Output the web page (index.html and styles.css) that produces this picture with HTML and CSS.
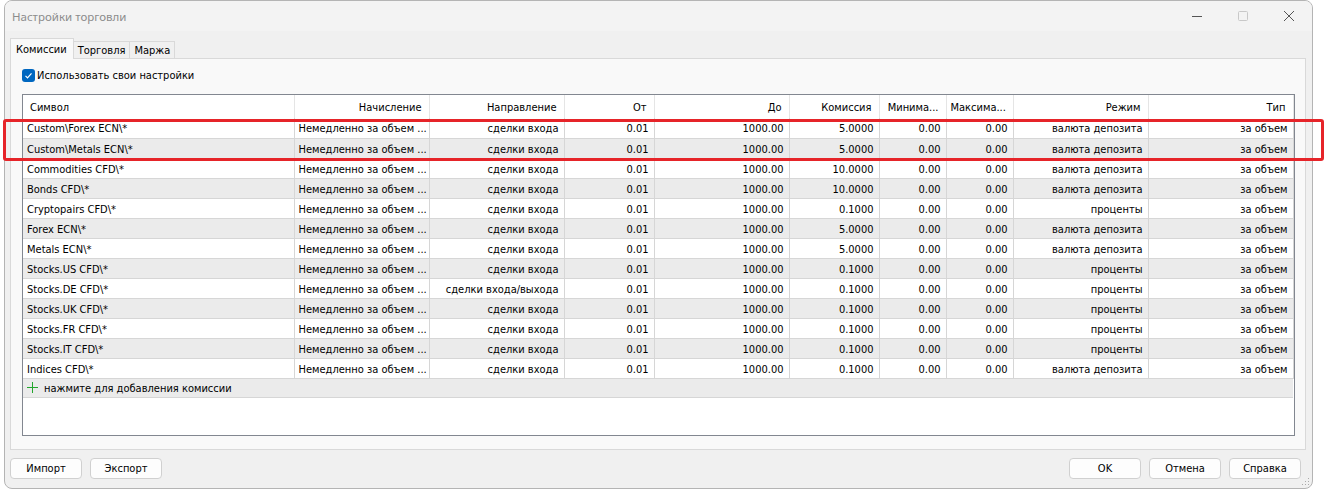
FILE: index.html
```html
<!DOCTYPE html>
<html lang="ru">
<head>
    <title>Настройки торговли</title>
    <meta charset="UTF-8">
    <meta name="viewport" content="width=device-width, initial-scale=1.0">
    <link rel="stylesheet" href="styles.css">
</head>
<body>
    <div class="window">
        <div class="titlebar">
            <span class="title">Настройки торговли</span>
            <div class="controls">
                <span class="ctl">
                    <svg width="10" height="10" viewBox="0 0 10 10"><path d="M0 5.5h10" stroke="#555" stroke-width="1"/></svg>
                </span>
                <span class="ctl">
                    <svg width="10" height="10" viewBox="0 0 10 10"><rect x="0.5" y="0.5" width="9" height="9" rx="1" fill="none" stroke="#c8c8c8"/></svg>
                </span>
                <span class="ctl">
                    <svg width="10" height="10" viewBox="0 0 10 10"><path d="M0 0L10 10M10 0L0 10" stroke="#555" stroke-width="1"/></svg>
                </span>
            </div>
        </div>

        <div class="content">
            <div class="tabs">
                <span class="tab active">Комиссии</span>
                <span class="tab">Торговля</span>
                <span class="tab">Маржа</span>
            </div>
            <div class="panel">
                <label class="check">
                    <span class="box">
                        <svg width="13" height="13" viewBox="0 0 13 13"><path d="M3.5 6.8l2 2 4-4.5" fill="none" stroke="#fff" stroke-width="1.2"/></svg>
                    </span>
                    Использовать свои настройки
                </label>

                <div class="list">
                    <table class="grid">
                        <colgroup>
                            <col style="width:271px"><col style="width:135px"><col style="width:135px">
                            <col style="width:90px"><col style="width:135px"><col style="width:90px">
                            <col style="width:67px"><col style="width:67px"><col style="width:135px">
                            <col style="width:145px">
                        </colgroup>
                        <thead>
                            <tr>
                                <th class="left">Символ</th>
                                <th>Начисление</th>
                                <th>Направление</th>
                                <th>От</th>
                                <th>До</th>
                                <th>Комиссия</th>
                                <th>Минима...</th>
                                <th>Максима...</th>
                                <th>Режим</th>
                                <th>Тип</th>
                            </tr>
                        </thead>
                        <tbody id="rows"></tbody>
                    </table>
                </div>
            </div>
        </div>

        <div class="footer">
            <div class="btns">
                <button class="btn">Импорт</button>
                <button class="btn">Экспорт</button>
            </div>
            <div class="btns">
                <button class="btn">OK</button>
                <button class="btn">Отмена</button>
                <button class="btn">Справка</button>
            </div>
        </div>
        <svg class="grip" width="8" height="8" viewBox="0 0 8 8">
            <rect x="6" y="0" width="1" height="1" fill="#aaa"/>
            <rect x="3" y="3" width="1" height="1" fill="#aaa"/><rect x="6" y="3" width="1" height="1" fill="#aaa"/>
            <rect x="0" y="6" width="1" height="1" fill="#aaa"/><rect x="3" y="6" width="1" height="1" fill="#aaa"/><rect x="6" y="6" width="1" height="1" fill="#aaa"/>
        </svg>
    </div>

    <div class="mark"></div>

    <script>
        const data = [
            ["Custom\\Forex ECN\\*", "сделки входа", "5.0000", "валюта депозита"],
            ["Custom\\Metals ECN\\*", "сделки входа", "5.0000", "валюта депозита"],
            ["Commodities CFD\\*", "сделки входа", "10.0000", "валюта депозита"],
            ["Bonds CFD\\*", "сделки входа", "10.0000", "валюта депозита"],
            ["Cryptopairs CFD\\*", "сделки входа", "0.1000", "проценты"],
            ["Forex ECN\\*", "сделки входа", "5.0000", "валюта депозита"],
            ["Metals ECN\\*", "сделки входа", "5.0000", "валюта депозита"],
            ["Stocks.US CFD\\*", "сделки входа", "0.1000", "проценты"],
            ["Stocks.DE CFD\\*", "сделки входа/выхода", "0.1000", "проценты"],
            ["Stocks.UK CFD\\*", "сделки входа", "0.1000", "проценты"],
            ["Stocks.FR CFD\\*", "сделки входа", "0.1000", "проценты"],
            ["Stocks.IT CFD\\*", "сделки входа", "0.1000", "проценты"],
            ["Indices CFD\\*", "сделки входа", "0.1000", "валюта депозита"]
        ];
        const tbody = document.querySelector("#rows");
        data.forEach((r) => {
            const tr = document.createElement("tr");
            const cells = [r[0], "Немедленно за объем ...", r[1], "0.01", "1000.00", r[2], "0.00", "0.00", r[3], "за объем"];
            cells.forEach((c, i) => {
                const td = document.createElement("td");
                td.textContent = c;
                if (i === 0 || i === 1) td.className = "left";
                tr.appendChild(td);
            });
            tbody.appendChild(tr);
        });
        const add = document.createElement("tr");
        add.className = "add";
        add.innerHTML = '<td colspan="10"><span class="plus"><svg width="11" height="11" viewBox="0 0 11 11" shape-rendering="crispEdges"><rect x="5" y="0" width="1" height="11" fill="#22a52c"/><rect x="0" y="5" width="11" height="1" fill="#22a52c"/></svg></span>нажмите для добавления комиссии</td>';
        tbody.appendChild(add);
    </script>
</body>
</html>
```

FILE: styles.css
```css
* {
    box-sizing: border-box;
}

body {
    margin: 0;
    background: #ffffff;
    font-family: "DejaVu Sans Condensed", "DejaVu Sans", sans-serif;
    font-size: 11px;
    color: #000;
}

.window {
    position: relative;
    margin-left: 4px;
    width: 1309px;
    height: 489px;
    border: 1px solid #b4b4b4;
    border-radius: 8px;
    background: #f0f0f0;
    display: flex;
    flex-direction: column;
    overflow: hidden;
}

.titlebar {
    height: 30px;
    background: #f3f3f3;
    display: flex;
    align-items: center;
    justify-content: space-between;
    padding-left: 7px;
}

.title {
    font-family: "Noto Sans", sans-serif;
    font-size: 11.5px;
    color: #8c8c8c;
}

.controls {
    display: flex;
    height: 100%;
}

.ctl {
    width: 46px;
    height: 100%;
    display: flex;
    align-items: center;
    justify-content: center;
}

.content {
    padding: 7px 6px 0 5px;
}

.tabs {
    display: flex;
    align-items: flex-end;
    height: 20px;
    padding-left: 1px;
    font-size: 11px;
}

.tab {
    height: 17px;
    padding: 1px 4px 0;
    border: 1px solid #d9d9d9;
    border-bottom: none;
    background: #f0f0f0;
    display: flex;
    align-items: center;
    margin-left: -1px;
}

.tab.active {
    height: 21px;
    background: #f9f9f9;
    position: relative;
    margin-bottom: -1px;
    z-index: 1;
    padding: 0 6px 0 5px;
}

.panel {
    height: 392px;
    border: 1px solid #d9d9d9;
    background: #f9f9f9;
    padding: 10px 10px 0 11px;
}

.check {
    display: flex;
    align-items: center;
    gap: 2px;
    height: 13px;
    font-size: 11px;
}

.box {
    width: 13px;
    height: 13px;
    border-radius: 3px;
    background: #0067c0;
    display: flex;
}

.list {
    margin-top: 12px;
    width: 1273px;
    height: 342px;
    border: 1px solid #828790;
    background: #ffffff;
}

.grid {
    table-layout: fixed;
    border-collapse: collapse;
    width: 1270px;
}

.grid th,
.grid td {
    text-align: right;
    white-space: nowrap;
    overflow: hidden;
    padding: 2px 5px 0 4px;
    font-weight: normal;
}

.grid th {
    height: 23px;
    border-right: 1px solid #e5e5e5;
    padding-right: 7px;
}

.grid th.left {
    text-align: left;
    padding-left: 7px;
}

.grid td {
    height: 20px;
    border-right: 1px solid #d6d6d6;
    border-bottom: 1px solid #d6d6d6;
}

.grid td.left {
    text-align: left;
}

.grid tbody tr:nth-child(even) td {
    background: #ebebeb;
}

.grid tr.add td {
    text-align: left;
    border-right: none;
    padding-left: 4px;
    height: 19px;
}

.plus {
    display: inline-block;
    width: 17px;
    vertical-align: -1px;
}

.footer {
    display: flex;
    justify-content: space-between;
    padding: 8px 11px 0 5px;
}

.btns {
    display: flex;
    gap: 8px;
}

.btn {
    width: 72px;
    height: 21px;
    border: 1px solid #d0d0d0;
    border-radius: 4px;
    background: #fdfdfd;
    font-family: "DejaVu Sans Condensed", "DejaVu Sans", sans-serif;
    font-size: 11px;
    color: #000;
    padding: 0;
}

.grip {
    position: absolute;
    right: 2px;
    bottom: 2px;
}

.mark {
    position: absolute;
    left: 3px;
    top: 119px;
    width: 1321px;
    height: 42px;
    border: 3px solid #e62429;
    border-radius: 3px;
}
```
